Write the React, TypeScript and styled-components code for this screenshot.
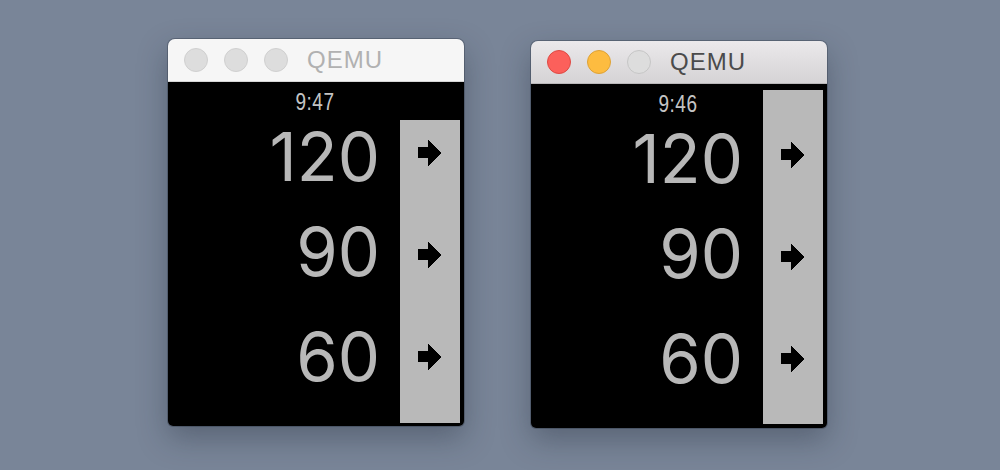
import styled, { createGlobalStyle } from 'styled-components';

const GlobalStyle = createGlobalStyle`
  html, body {
    margin: 0;
    padding: 0;
    background: #798598;
  }
  body {
    font-family: 'Liberation Sans', Arial, sans-serif;
  }
`;

const Desktop = styled.div`
  width: 1000px;
  height: 470px;
  box-sizing: border-box;
  padding: 39px 0 0 168px;
  display: flex;
  align-items: flex-start;
  gap: 67px;
  background: #798598;
  overflow: hidden;
`;

const Window = styled.div<{ $offset: number }>`
  width: 296px;
  margin-top: ${({ $offset }) => $offset}px;
  border-radius: 7px 7px 5px 5px;
  overflow: hidden;
  display: flex;
  flex-direction: column;
  box-shadow: 0 0 0 1px rgba(40, 48, 62, 0.35), 0 12px 30px rgba(30, 38, 52, 0.35);
`;

const TitleBar = styled.div<{ $active: boolean }>`
  height: 42px;
  display: flex;
  align-items: center;
  padding-left: 16px;
  border-bottom: 1px solid ${({ $active }) => ($active ? '#b9b7b9' : '#d6d6d6')};
  background: ${({ $active }) =>
    $active ? 'linear-gradient(#ebe9eb, #d5d3d5)' : '#f6f6f6'};
`;

const Lights = styled.div`
  display: flex;
  gap: 16px;
`;

const Light = styled.span<{ $fill: string; $edge: string }>`
  width: 24px;
  height: 24px;
  box-sizing: border-box;
  border-radius: 50%;
  background: ${({ $fill }) => $fill};
  border: 1px solid ${({ $edge }) => $edge};
`;

const Title = styled.span<{ $active: boolean }>`
  margin-left: 19px;
  font-size: 24px;
  letter-spacing: 1px;
  color: ${({ $active }) => ($active ? '#4b4b4b' : '#b1b1b1')};
`;

const Screen = styled.div`
  height: 344px;
  display: flex;
  background: #000;
`;

const Content = styled.div`
  flex: 1;
  display: flex;
  flex-direction: column;
`;

const Time = styled.div`
  height: 40px;
  padding-left: 62px;
  display: flex;
  align-items: center;
  justify-content: center;
  color: #c4c4c4;
  font-family: 'Liberation Sans', Arial, sans-serif;
  font-size: 19px;
  letter-spacing: 0.5px;

  span {
    display: inline-block;
    transform: scaleY(1.3);
  }
`;

const Numbers = styled.div`
  margin-top: -14px;
  display: grid;
  grid-template-rows: 96px 95px 114px;
`;

const NumberRow = styled.div`
  display: flex;
  align-items: center;
  justify-content: flex-end;
  padding-right: 20px;
  font-family: Inter, 'Open Sans', sans-serif;
  font-weight: 400;
  font-size: 67px;
  line-height: 1;
  color: #b8b8b8;
`;

const ActionBar = styled.div<{ $top: number; $bottom: number }>`
  width: 60px;
  margin: ${({ $top, $bottom }) => `${$top}px 4px ${$bottom}px 0`};
  padding-top: ${({ $top }) => 58 - $top}px;
  box-sizing: border-box;
  background: #b9b9b9;
  display: flex;
  flex-direction: column;
  align-items: center;
  gap: 76px;
`;

const Arrow = () => (
  <svg width="24" height="26" viewBox="0 0 24 26" shapeRendering="crispEdges">
    <polygon points="0,7 10,7 10,0 23,13 10,26 10,18 0,18" fill="#000" />
  </svg>
);

interface QemuWindowProps {
  active: boolean;
  time: string;
  barTop: number;
  barBottom: number;
  offset: number;
}

const values = ['120', '90', '60'];

const QemuWindow = ({ active, time, barTop, barBottom, offset }: QemuWindowProps) => (
  <Window $offset={offset}>
    <TitleBar $active={active}>
      <Lights>
        <Light $fill={active ? '#fc605b' : '#dddddd'} $edge={active ? '#de4a44' : '#d0d0d0'} />
        <Light $fill={active ? '#fdbc40' : '#dddddd'} $edge={active ? '#dea236' : '#d0d0d0'} />
        <Light $fill="#dddddd" $edge={active ? '#c6c6c6' : '#d0d0d0'} />
      </Lights>
      <Title $active={active}>QEMU</Title>
    </TitleBar>
    <Screen>
      <Content>
        <Time>
          <span>{time}</span>
        </Time>
        <Numbers>
          {values.map((v) => (
            <NumberRow key={v}>{v}</NumberRow>
          ))}
        </Numbers>
      </Content>
      <ActionBar $top={barTop} $bottom={barBottom}>
        {values.map((v) => (
          <Arrow key={v} />
        ))}
      </ActionBar>
    </Screen>
  </Window>
);

export default function App() {
  return (
    <>
      <GlobalStyle />
      <Desktop>
        <QemuWindow active={false} time="9:47" barTop={38} barBottom={3} offset={0} />
        <QemuWindow active time="9:46" barTop={6} barBottom={4} offset={2} />
      </Desktop>
    </>
  );
}
